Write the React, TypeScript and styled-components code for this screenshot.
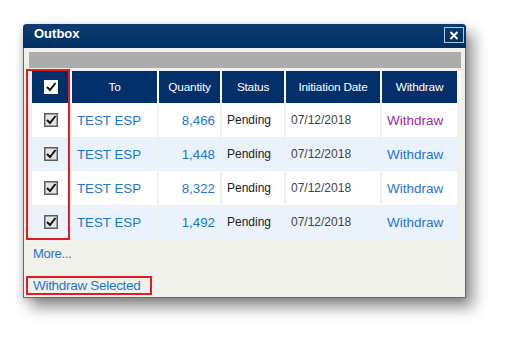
import React from "react";
import styled, { createGlobalStyle } from "styled-components";

const GlobalStyle = createGlobalStyle`
  html, body {
    margin: 0;
    padding: 0;
    background: #ffffff;
    font-family: "Liberation Sans", Arial, sans-serif;
  }
`;

const Page = styled.div`
  padding: 24px 0 0 23px;
  width: 509px;
  height: 341px;
  box-sizing: border-box;
`;

const Window = styled.div`
  width: 443px;
  height: 274px;
  box-sizing: border-box;
  border: 1px solid #4c6e9f;
  border-top: none;
  border-radius: 4px 4px 0 0;
  background: #f1f1ec;
  box-shadow: 7px 9px 15px rgba(0, 0, 0, 0.45), -1px 2px 6px rgba(0, 0, 0, 0.15);
  display: flex;
  flex-direction: column;
`;

const TitleBar = styled.div`
  height: 24px;
  margin: 0 -1px;
  border-radius: 4px 4px 0 0;
  background: linear-gradient(#0d3c72, #002f63);
  display: flex;
  align-items: flex-start;
  justify-content: space-between;
  padding: 0 2px 0 11px;
`;

const Title = styled.span`
  color: #ffffff;
  font-weight: bold;
  font-size: 13px;
  line-height: 15px;
  padding-top: 2px;
`;

const CloseButton = styled.div`
  width: 18px;
  height: 14px;
  margin-top: 3px;
  border: 1px solid #b9c6da;
  display: flex;
  align-items: center;
  justify-content: center;
`;

const Body = styled.div`
  flex: 1;
  padding: 4px 4px 0 5px;
  display: flex;
  flex-direction: column;
`;

const GrayBar = styled.div`
  height: 16px;
  background: #acacac;
`;

const TableWrap = styled.div`
  position: relative;
  margin: 3px 0 0 3px;
`;

const Row = styled.div<{ $bg: string; $head?: boolean }>`
  display: grid;
  grid-template-columns: 38px 85px 61px 62px 94px 75px;
  column-gap: 2px;
  height: ${(p) => (p.$head ? 32 : 34)}px;
  background: ${(p) => (p.$head ? "#ffffff" : "#f0f0ee")};
  & > div {
    background: ${(p) => p.$bg};
  }
`;

const HeadCell = styled.div`
  color: #ffffff;
  font-size: 11.8px;
  letter-spacing: -0.2px;
  display: flex;
  align-items: center;
  justify-content: center;
`;

const Cell = styled.div<{ $align?: string; $color?: string; $size?: number }>`
  display: flex;
  align-items: center;
  justify-content: ${(p) => p.$align || "flex-start"};
  padding: 0 5px;
  color: ${(p) => p.$color || "#333333"};
  font-size: ${(p) => p.$size || 12}px;
  white-space: nowrap;
`;

const RedFrame = styled.div`
  position: absolute;
  left: -6px;
  top: -2px;
  width: 44px;
  height: 171px;
  box-sizing: border-box;
  border: 2px solid #e31b23;
  pointer-events: none;
`;

const Link = styled.a<{ $color?: string }>`
  color: ${(p) => p.$color || "#1f75d0"};
  font-size: 13px;
  text-decoration: none;
`;

const MoreLink = styled(Link)`
  margin: 7px 0 0 4px;
  line-height: 15px;
  letter-spacing: -0.3px;
`;

const SelectedBox = styled.div`
  margin: 15px 0 0 -3px;
  width: 126px;
  height: 19px;
  box-sizing: border-box;
  border: 2px solid #e31b23;
  padding-left: 5px;
  display: flex;
  align-items: center;
  font-size: 13.5px;
  letter-spacing: -0.3px;
  color: #1f75d0;
  white-space: nowrap;
`;

const CheckBox = ({ head }: { head?: boolean }) => (
  <svg width="14" height="14" viewBox="0 0 14 14">
    <rect
      x="0.75"
      y="0.75"
      width="12.5"
      height="12.5"
      fill={head ? "#ffffff" : "#e4e4e4"}
      stroke={head ? "#ffffff" : "#5c5c5c"}
      strokeWidth="1.5"
    />
    <path d="M3 7 L6 10 L11.5 3" fill="none" stroke="#111" strokeWidth="2" />
  </svg>
);

const rows = [
  { qty: "8,466", visited: true },
  { qty: "1,448" },
  { qty: "8,322" },
  { qty: "1,492" },
];

export default function App() {
  return (
    <Page>
      <GlobalStyle />
      <Window>
        <TitleBar>
          <Title>Outbox</Title>
          <CloseButton>
            <svg width="10" height="9" viewBox="0 0 10 9">
              <path d="M1.5 1 L8.5 8 M8.5 1 L1.5 8" stroke="#fff" strokeWidth="2" />
            </svg>
          </CloseButton>
        </TitleBar>
        <Body>
          <GrayBar />
          <TableWrap>
            <Row $head $bg="#03306a">
              <HeadCell>
                <CheckBox head />
              </HeadCell>
              <HeadCell>To</HeadCell>
              <HeadCell>Quantity</HeadCell>
              <HeadCell>Status</HeadCell>
              <HeadCell>Initiation Date</HeadCell>
              <HeadCell>Withdraw</HeadCell>
            </Row>
            {rows.map((r, i) => (
              <Row key={i} $bg={i % 2 ? "#eaf3fb" : "#ffffff"}>
                <Cell $align="center">
                  <CheckBox />
                </Cell>
                <Cell $color="#1f75d0" $size={13.3}>TEST ESP</Cell>
                <Cell $align="flex-end" $color="#1f75d0" $size={13.3}>
                  {r.qty}
                </Cell>
                <Cell $color="#222">Pending</Cell>
                <Cell $color="#444">07/12/2018</Cell>
                <Cell $color={r.visited ? "#9c2aa0" : "#1f75d0"} $size={13.5}>
                  Withdraw
                </Cell>
              </Row>
            ))}
            <RedFrame />
          </TableWrap>
          <MoreLink>More...</MoreLink>
          <SelectedBox>Withdraw Selected</SelectedBox>
        </Body>
      </Window>
    </Page>
  );
}
